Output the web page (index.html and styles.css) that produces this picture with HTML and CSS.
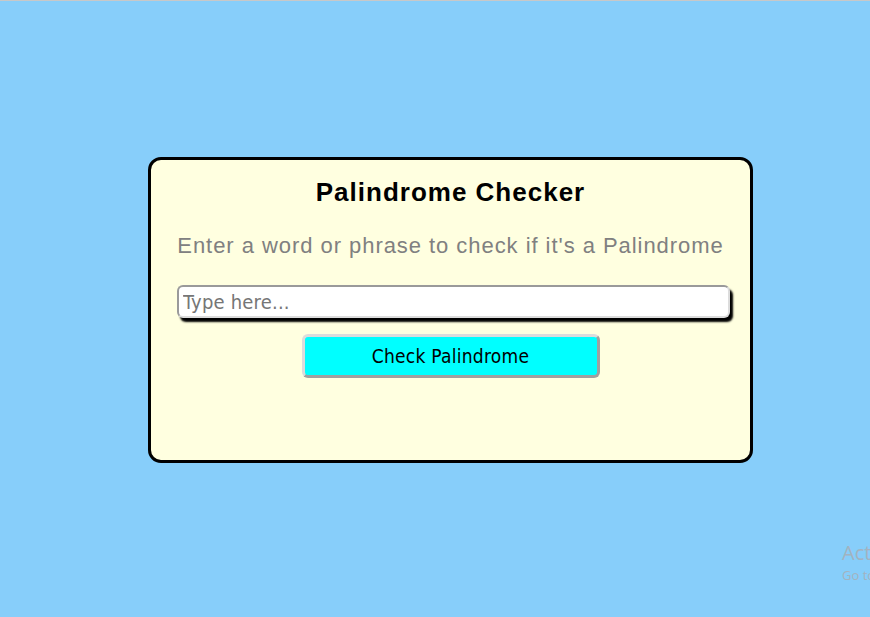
FILE: index.html
```html
<!DOCTYPE html>
<html lang="en">
<head>
<meta charset="utf-8">
<title>Palindrome Checker</title>
<link rel="stylesheet" href="styles.css">
</head>
<body>
<main class="page">
  <section class="card">
    <h1 class="title">Palindrome Checker</h1>
    <p class="subtitle">Enter a word or phrase to check if it's a Palindrome</p>
    <input class="text-input" type="text" placeholder="Type here...">
    <button class="check-btn" type="button">Check Palindrome</button>
  </section>
</main>
<div class="watermark">
  <div class="wm-title">Activate Windows</div>
  <div class="wm-sub">Go to Settings to activate Windows.</div>
</div>
</body>
</html>
```
FILE: styles.css
```css
html, body {
  margin: 0;
  padding: 0;
  height: 100%;
  overflow: hidden;
}
body {
  background: #87cefa;
  border-top: 1px solid #c8c8c8;
  box-sizing: border-box;
  position: relative;
  font-family: "Liberation Sans", Arial, sans-serif;
}
.page {
  display: flex;
  justify-content: flex-start;
  padding: 156px 0 0 148px;
}
.card {
  width: 605px;
  height: 306px;
  box-sizing: border-box;
  background: #ffffe0;
  border: 3px solid #000;
  border-radius: 13px;
  padding: 17px 20px 0 26px;
  display: flex;
  flex-direction: column;
  align-items: center;
}
.title {
  margin: 0 0 0 -6px;
  font-size: 26px;
  letter-spacing: 1px;
  font-weight: bold;
  color: #000;
  line-height: 30px;
  white-space: nowrap;
}
.subtitle {
  margin: 26px 0 0 -6px;
  font-size: 22px;
  letter-spacing: 0.95px;
  line-height: 25px;
  color: #808080;
  white-space: nowrap;
}
.text-input {
  margin-top: 27px;
  align-self: stretch;
  height: 33px;
  box-sizing: border-box;
  border: 2px solid;
  border-color: #9a9a9a #dcdcdc #dcdcdc #9a9a9a;
  border-radius: 6px;
  background: #fff;
  box-shadow: 3px 4px 2px #000;
  padding: 0 4px;
  font-family: "DejaVu Sans Condensed", "DejaVu Sans", sans-serif;
  font-size: 20px;
  letter-spacing: 0.2px;
  color: #000;
  outline: none;
}
.text-input::placeholder {
  color: #767676;
}
.check-btn {
  margin: 16px 0 0 -6px;
  width: 298px;
  height: 44px;
  box-sizing: border-box;
  background: #00ffff;
  border: 3px solid;
  border-color: #dcdcdc #a0a0a0 #a0a0a0 #dcdcdc;
  border-radius: 6px;
  font-family: "DejaVu Sans Condensed", "DejaVu Sans", sans-serif;
  font-size: 19px;
  letter-spacing: 0.25px;
  color: #000;
  padding: 0;
}
.watermark {
  position: absolute;
  left: 842px;
  top: 539px;
  white-space: nowrap;
  color: #a3b3c0;
  font-family: "Open Sans", "Noto Sans", sans-serif;
}
.wm-title {
  font-size: 20px;
  line-height: 26px;
}
.wm-sub {
  font-size: 13px;
  line-height: 18px;
}
```
